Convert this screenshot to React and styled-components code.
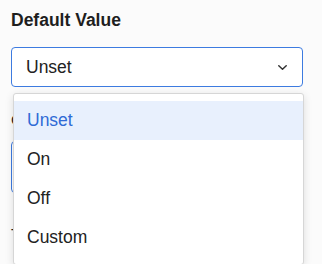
import styled, { createGlobalStyle } from "styled-components";

const Global = createGlobalStyle`
  body {
    margin: 0;
    background: #fbfbfb;
    font-family: "Liberation Sans", Arial, sans-serif;
    color: #222;
  }
`;

const Page = styled.div`
  width: 322px;
  height: 264px;
  overflow: hidden;
  padding: 9px 11px 0 11px;
  box-sizing: border-box;
`;

const Title = styled.div`
  font-size: 17.5px;
  font-weight: bold;
  line-height: 22px;
  margin-bottom: 16px;
  color: #1e1e1e;
`;

const Field = styled.div`
  position: relative;
  width: 292px;
`;

const SelectBox = styled.div`
  height: 40px;
  box-sizing: border-box;
  border: 1.5px solid #3d7be0;
  border-radius: 4px;
  background: #fff;
  display: flex;
  align-items: center;
  justify-content: space-between;
  padding: 0 15px 0 14px;
  font-size: 17.5px;
`;

const Menu = styled.ul`
  position: absolute;
  top: 46px;
  left: 2px;
  width: 291px;
  margin: 0;
  padding: 7px 0 7px;
  list-style: none;
  box-sizing: border-box;
  background: #fff;
  border: 1px solid #d6d6d6;
  border-radius: 3px;
  box-shadow: 0 2px 8px rgba(0, 0, 0, 0.12);
  z-index: 2;
`;

const Option = styled.li`
  height: 39px;
  display: flex;
  align-items: center;
  padding-left: 13px;
  font-size: 17.5px;
  color: ${(p) => (p.$active ? "#2f6bd6" : "#222")};
  background: ${(p) => (p.$active ? "#e8f0fd" : "transparent")};
`;

const Below = styled.div`
  padding-top: 24px;
`;

const SubLabel = styled.div`
  font-size: 15px;
  line-height: 18px;
`;

const TextArea = styled.div`
  width: 286px;
  height: 50px;
  margin: 12px 0 32px;
  border: 1.5px solid #3d7be0;
  border-radius: 4px;
  background: #fff;
`;

const options = ["Unset", "On", "Off", "Custom"];

export default function App() {
  return (
    <>
      <Global />
      <Page>
        <Title>Default Value</Title>
        <Field>
          <SelectBox>
            <span>Unset</span>
            <svg width="9" height="5" viewBox="0 0 9 5" fill="none">
              <path d="M0.8 0.8l3.7 3.4 3.7-3.4" stroke="#333" strokeWidth="1.5" strokeLinecap="round" strokeLinejoin="round" />
            </svg>
          </SelectBox>
          <Menu>
            {options.map((o, i) => (
              <Option key={o} $active={i === 0}>
                {o}
              </Option>
            ))}
          </Menu>
        </Field>
        <Below>
          <SubLabel>Custom value</SubLabel>
          <TextArea />
          <SubLabel>Text</SubLabel>
        </Below>
      </Page>
    </>
  );
}
